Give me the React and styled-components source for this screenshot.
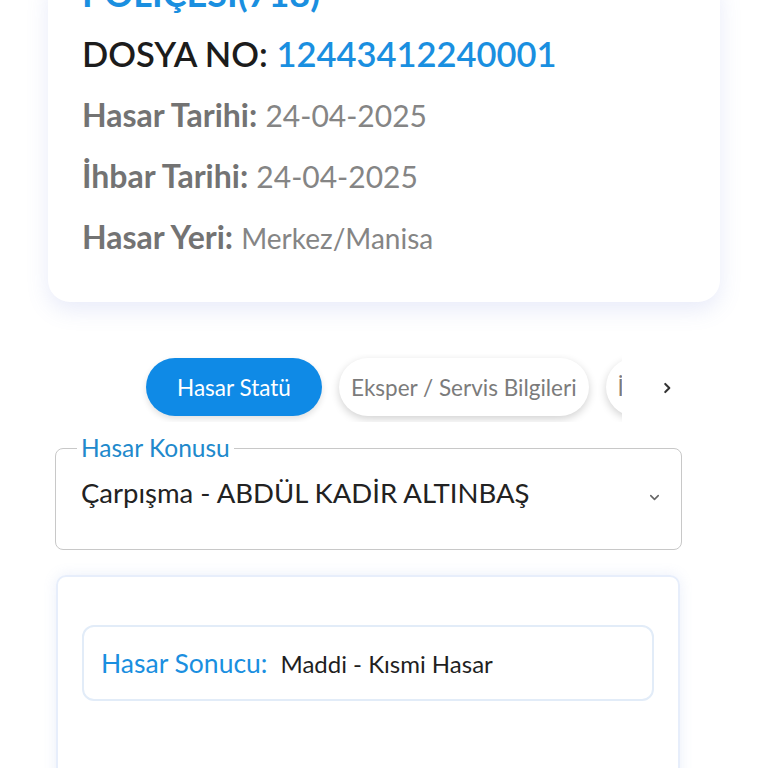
import React from "react";
import styled, { createGlobalStyle } from "styled-components";

const Global = createGlobalStyle`
  html, body { margin: 0; padding: 0; background: #ffffff; }
  body { font-family: "Lato", "Noto Sans", sans-serif; overflow: hidden; }
  * { box-sizing: border-box; }
`;

const Page = styled.div`
  width: 768px;
  height: 768px;
  overflow: hidden;
  padding: 0 48px;
`;

const InfoCard = styled.section`
  margin-top: -26px;
  background: #fff;
  border-radius: 22px;
  box-shadow: 0 8px 22px rgba(110, 130, 220, 0.16);
  padding: 0 34px 42px;
  display: flex;
  flex-direction: column;
`;

const PolicyTitle = styled.div`
  color: #1a8fe0;
  font-size: 36px;
  font-weight: 700;
  line-height: 38px;
`;

const FileNo = styled.div`
  margin-top: 20px;
  font-size: 34.5px;
  font-weight: 600;
  color: #1c1c1c;
  line-height: 44px;
  span { color: #1a8fe0; }
`;

const InfoLine = styled.div`
  margin-top: 17px;
  font-size: 32px;
  line-height: 44px;
  color: #7a7a7a;
  b { font-weight: 700; color: #737373; }
  span { font-weight: 400; font-size: ${p => p.$small ? 28 : 30}px; color: #858585; }
`;

const TabsRow = styled.div`
  margin-top: 52px;
  display: flex;
  align-items: center;
  padding-left: 98px;
`;

const TabsScroll = styled.div`
  width: 482px;
  overflow: hidden;
  display: flex;
  gap: 17px;
  padding: 4px 0 6px 6px;
  margin-left: -6px;
`;

const Tab = styled.button`
  flex: none;
  height: 58px;
  min-width: 176px;
  padding: 0 12px;
  border: none;
  border-radius: 29px;
  font-family: inherit;
  font-size: 22.5px;
  background: ${p => (p.$active ? "#0f8ae6" : "#fff")};
  color: ${p => (p.$active ? "#fff" : "#7b7b7b")};
  box-shadow: ${p => (p.$active ? "0 3px 6px rgba(0,0,0,0.12)" : "0 3px 8px rgba(0,0,0,0.18)")};
  display: flex;
  align-items: center;
  justify-content: center;
`;

const ArrowButton = styled.div`
  width: 90px;
  display: flex;
  justify-content: center;
  color: #333;
`;

const SelectField = styled.fieldset`
  margin: 14px 38px 0 7px;
  height: 114px;
  border: 1.5px solid #c8c8c8;
  border-radius: 8px;
  padding: 0 19px 0 25px;
  display: flex;
  align-items: flex-start;
  legend {
    padding: 0 4px;
    margin-left: -4px;
    font-size: 24.5px;
    color: #2189cc;
    line-height: 24px;
  }
`;

const SelectBody = styled.div`
  flex: 1;
  display: flex;
  align-items: center;
  justify-content: space-between;
  margin-top: 16px;
  font-size: 27.5px;
  color: #222;
`;

const ResultCard = styled.section`
  margin: 25px 40px 0 8px;
  height: 260px;
  border: 2px solid #e7eefb;
  border-radius: 10px;
  box-shadow: 0 0 14px rgba(110, 140, 220, 0.14);
  padding: 48px 24px 0 24px;
`;

const ResultBox = styled.div`
  height: 76px;
  border: 2px solid #e2ecf8;
  border-radius: 12px;
  display: flex;
  align-items: center;
  padding-left: 17px;
  gap: 13px;
  b { font-weight: 400; font-size: 26.5px; color: #1a8fe0; }
  span { font-size: 24px; color: #1f1f1f; }
`;

export default function App() {
  return (
    <Page>
      <Global />
      <InfoCard>
        <PolicyTitle>POLİÇESİ(718)</PolicyTitle>
        <FileNo>
          DOSYA NO: <span>12443412240001</span>
        </FileNo>
        <InfoLine>
          <b>Hasar Tarihi:</b> <span>24-04-2025</span>
        </InfoLine>
        <InfoLine>
          <b>İhbar Tarihi:</b> <span>24-04-2025</span>
        </InfoLine>
        <InfoLine $small>
          <b>Hasar Yeri:</b> <span>Merkez/Manisa</span>
        </InfoLine>
      </InfoCard>

      <TabsRow>
        <TabsScroll>
          <Tab $active>Hasar Statü</Tab>
          <Tab>Eksper / Servis Bilgileri</Tab>
          <Tab>İhbar / Evrak Bilgileri</Tab>
        </TabsScroll>
        <ArrowButton>
          <svg width="14" height="14" viewBox="0 0 24 24" fill="none" stroke="#333" strokeWidth="3.5" strokeLinecap="round" strokeLinejoin="round">
            <path d="M9 5l7 7-7 7" />
          </svg>
        </ArrowButton>
      </TabsRow>

      <SelectField>
        <legend>Hasar Konusu</legend>
        <SelectBody>
          <span>Çarpışma - ABDÜL KADİR ALTINBAŞ</span>
          <svg width="15" height="15" viewBox="0 0 24 24" fill="none" stroke="#666" strokeWidth="2.5" strokeLinecap="round" strokeLinejoin="round" style={{ marginTop: 10 }}>
            <path d="M6 9l6 6 6-6" />
          </svg>
        </SelectBody>
      </SelectField>

      <ResultCard>
        <ResultBox>
          <b>Hasar Sonucu:</b>
          <span>Maddi - Kısmi Hasar</span>
        </ResultBox>
      </ResultCard>
    </Page>
  );
}
